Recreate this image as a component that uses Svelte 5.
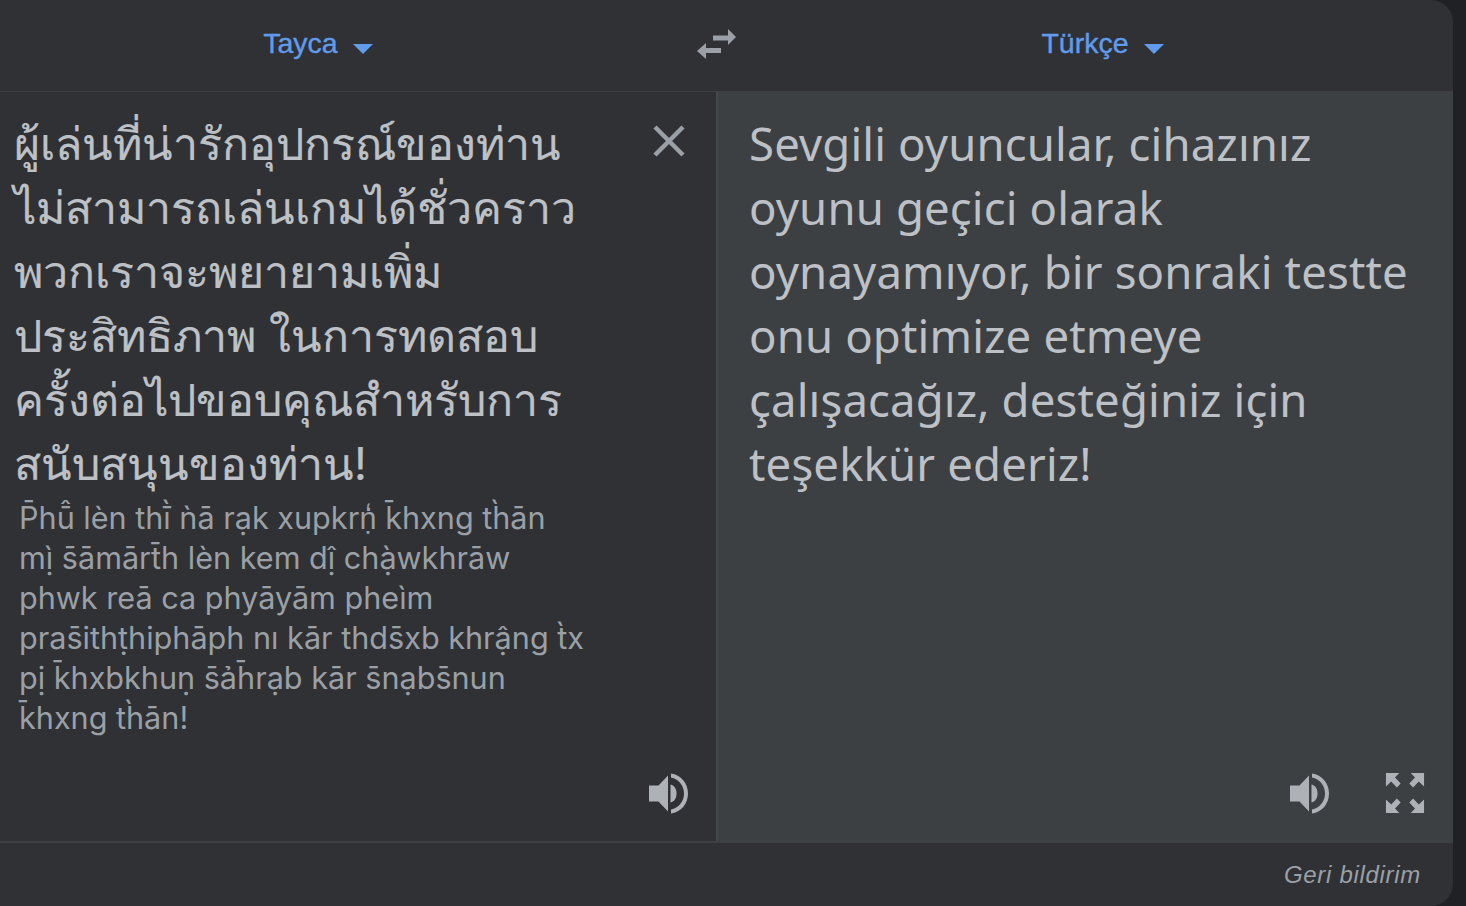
<script>
    const thai = [
        'ผู้เล่นที่น่ารักอุปกรณ์ของท่าน',
        'ไม่สามารถเล่นเกมได้ชั่วคราว',
        'พวกเราจะพยายามเพิ่ม',
        'ประสิทธิภาพ ในการทดสอบ',
        'ครั้งต่อไปขอบคุณสำหรับการ',
        'สนับสนุนของท่าน!'
    ];
    const romanized = [
        'P̄hū̂ lèn thī̀ ǹā rạk xupkrṇ̒ k̄hxng th̀ān',
        'mị̀ s̄āmārt̄h lèn kem dị̂ chạ̀wkhrāw',
        'phwk reā ca phyāyām pheìm',
        'pras̄ithṭhiphāph nı kār thds̄xb khrậng t̀x',
        'pị k̄hxbkhuṇ s̄ảh̄rạb kār s̄nạbs̄nun',
        'k̄hxng th̀ān!'
    ];
    const turkish = [
        'Sevgili oyuncular, cihazınız',
        'oyunu geçici olarak',
        'oynayamıyor, bir sonraki testte',
        'onu optimize etmeye',
        'çalışacağız, desteğiniz için',
        'teşekkür ederiz!'
    ];
</script>

{#snippet speaker()}
    <svg class="speaker" width="42" height="42" viewBox="0 0 42 42">
        <path d="M1 13.5h9.500L20 3.500v36l-9.500-10H1z" />
        <path d="M22.500 12.500c4 1 6 4.500 6 9s-2 8-6 9z" />
        <path d="M23 1.500c10 1.500 17 9.500 17 20s-7 18.500-17 20v-4c7.500-1.500 13-8 13-16s-5.500-14.500-13-16z" />
    </svg>
{/snippet}

<div class="page">
    <div class="card">
        <header class="bar">
            <div class="lang">
                <span>Tayca</span>
                <i class="caret"></i>
            </div>
            <svg class="swap" width="40" height="30" viewBox="0 0 40 30">
                <path d="M16 6.500h15V0l8 8-8 8v-4.500H16z" />
                <path d="M24 19H9v-5l-9 8 9 8v-6h15z" />
            </svg>
            <div class="lang">
                <span>Türkçe</span>
                <i class="caret"></i>
            </div>
        </header>

        <main class="panels">
            <section class="source">
                <div class="thai">
                    {#each thai as line}
                        <div>{line}</div>
                    {/each}
                </div>
                <div class="roman">
                    {#each romanized as line}
                        <div>{line}</div>
                    {/each}
                </div>
                <svg class="close" width="34" height="34" viewBox="0 0 34 34">
                    <path d="M3 3l28 28M31 3L3 31" />
                </svg>
                <div class="tools">
                    {@render speaker()}
                </div>
            </section>
            <section class="target">
                <div class="result">
                    {#each turkish as line}
                        <div>{line}</div>
                    {/each}
                </div>
                <div class="tools">
                    {@render speaker()}
                    <svg class="expand" width="40" height="42" viewBox="0 0 42 42" preserveAspectRatio="none">
                        <path d="M1 1h14l-4.500 4.500 6 6-4 4-6-6L1 14.500z" />
                        <path d="M41 1H27l4.500 4.500-6 6 4 4 6-6 5.500 5z" />
                        <path d="M1 41h14l-4.500-4.500 6-6-4-4-6 6L1 27.500z" />
                        <path d="M41 41H27l4.500-4.500-6-6 4-4 6 6 5.500-5z" />
                    </svg>
                </div>
            </section>
        </main>

        <footer class="foot">
            <em>Geri bildirim</em>
        </footer>
    </div>
</div>

<style>
    :global(body) {
        background: #202124;
    }

    .page {
        height: 906px;
        overflow: hidden;
        background: #202124;
    }

    .card {
        width: 1453px;
        height: 906px;
        display: flex;
        flex-direction: column;
        background: #303134;
        border-radius: 0 22px 22px 0;
        font-family: Inter, "Liberation Sans", sans-serif;
        overflow: hidden;
    }

    .bar {
        height: 91px;
        flex: none;
        display: grid;
        grid-template-columns: 636px 1fr 701px;
        align-items: center;
        border-bottom: 1px solid #3c4043;
    }

    .lang {
        display: flex;
        justify-content: center;
        align-items: center;
        gap: 15px;
        padding-bottom: 4px;
        color: #619bec;
        font-size: 28.500px;
        font-family: "Liberation Sans", sans-serif;
        -webkit-text-stroke: 0.4px #619bec;
    }

    .caret {
        width: 0;
        height: 0;
        margin-top: 10px;
        border-left: 10px solid transparent;
        border-right: 10px solid transparent;
        border-top: 10px solid #619bec;
    }

    .swap {
        justify-self: end;
        margin-right: 15px;
        margin-bottom: 4px;
        fill: #9aa0a6;
    }

    .panels {
        height: 749px;
        flex: none;
        display: grid;
        grid-template-columns: 718px 1fr;
    }

    .source,
    .target {
        position: relative;
    }

    .source {
        padding: 20px 0 0 14px;
        border-right: 2px solid #45484b;
        box-sizing: border-box;
    }

    .target {
        background: #3c4043;
        padding: 19px 0 0 31px;
    }

    .thai,
    .result {
        line-height: 64px;
        color: #bdc1c6;
        white-space: nowrap;
    }

    .thai {
        font-size: 44.700px;
        -webkit-text-stroke: 0.2px #bdc1c6;
    }

    .result {
        font-family: "Noto Sans", sans-serif;
        font-size: 45.500px;
        font-weight: 400;
        letter-spacing: 0.15px;
    }

    .roman {
        padding: 2px 0 0 5px;
        font-size: 30.600px;
        line-height: 40px;
        color: #9aa0a6;
        white-space: nowrap;
    }

    .close {
        position: absolute;
        top: 32px;
        left: 652px;
        stroke: #9aa0a6;
        stroke-width: 4.500;
        fill: none;
    }

    .tools {
        position: absolute;
        bottom: 27px;
        right: 26px;
        display: flex;
        gap: 54px;
    }

    .target .tools {
        right: 28px;
    }

    .speaker,
    .expand {
        fill: #aeb2b7;
    }

    .foot {
        flex: 1;
        display: flex;
        justify-content: flex-end;
        align-items: center;
        padding-right: 32px;
        border-top: 2px solid #3c4043;
        color: #9aa0a6;
        font-size: 24px;
        letter-spacing: 0.7px;
        font-family: "Liberation Sans", sans-serif;
    }
</style>
